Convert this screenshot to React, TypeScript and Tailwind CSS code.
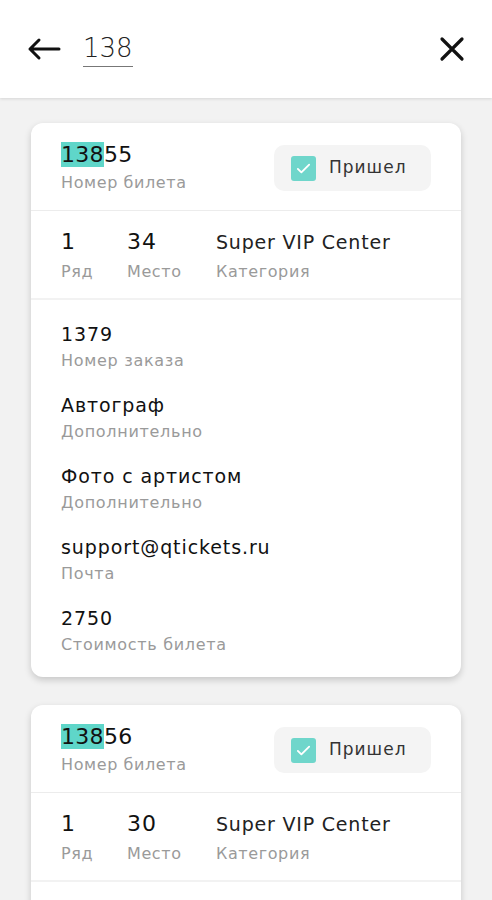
import React from 'react';

const font = { fontFamily: '"DejaVu Sans", "Noto Sans", sans-serif' };

interface Field {
  value: string;
  label: string;
}

interface Ticket {
  number: string;
  row: string;
  seat: string;
  category: string;
  details: Field[];
}

const query = '138';

const tickets: Ticket[] = [
  {
    number: '13855',
    row: '1',
    seat: '34',
    category: 'Super VIP Center',
    details: [
      { value: '1379', label: 'Номер заказа' },
      { value: 'Автограф', label: 'Дополнительно' },
      { value: 'Фото с артистом', label: 'Дополнительно' },
      { value: 'support@qtickets.ru', label: 'Почта' },
      { value: '2750', label: 'Стоимость билета' },
    ],
  },
  {
    number: '13856',
    row: '1',
    seat: '30',
    category: 'Super VIP Center',
    // rest of this card is below the fold
    details: [],
  },
];

function ArrivedButton() {
  return (
    <button className="flex items-center gap-[13px] h-[46px] w-[157px] pl-[17px] rounded-[10px] bg-[#f4f4f4]">
      <span className="w-[25px] h-[25px] rounded-[3px] bg-[#6fd6cb] flex items-center justify-center">
        <svg width="17" height="17" viewBox="0 0 24 24" fill="none" stroke="#fff" strokeWidth="2.6" strokeLinecap="round" strokeLinejoin="round">
          <path d="M4 12.5l5 5L20 6.5" />
        </svg>
      </span>
      <span className="text-[17px] tracking-[1px] text-[#333]">Пришел</span>
    </button>
  );
}

function TicketCard({ t }: { t: Ticket }) {
  const rest = t.number.slice(query.length);
  return (
    <div className="bg-white rounded-[12px] shadow-[0_3px_7px_rgba(0,0,0,0.18)] overflow-hidden">
      <div className="flex items-start justify-between pl-[30px] pr-[30px] pt-[17px] pb-[17px] border-b border-[#ececec]">
        <div>
          <div className="text-[22px] tracking-[0.3px] leading-[29px] text-[#111]">
            <span className="bg-[#5fd6c9]">{query}</span>
            {rest}
          </div>
          <div className="text-[16px] tracking-[0.6px] leading-[20px] text-[#9a9a9a] mt-[4px]">Номер билета</div>
        </div>
        <div className="pt-[5px]">
          <ArrivedButton />
        </div>
      </div>
      <div className="flex pl-[30px] pt-[17px] pb-[16px] border-b-[2px] border-[#f2f2f2]">
        <div className="w-[66px]">
          <div className="text-[22px] tracking-[1px] leading-[28px] text-[#111]">{t.row}</div>
          <div className="text-[16px] tracking-[0.6px] leading-[20px] text-[#9a9a9a] mt-[6px]">Ряд</div>
        </div>
        <div className="w-[89px]">
          <div className="text-[22px] tracking-[1px] leading-[28px] text-[#111]">{t.seat}</div>
          <div className="text-[16px] tracking-[0.6px] leading-[20px] text-[#9a9a9a] mt-[6px]">Место</div>
        </div>
        <div>
          <div className="text-[19px] tracking-[0.8px] leading-[28px] text-[#222]">{t.category}</div>
          <div className="text-[16px] tracking-[0.6px] leading-[20px] text-[#9a9a9a] mt-[6px]">Категория</div>
        </div>
      </div>
      <div className="flex flex-col gap-[21px] pl-[30px] pt-[21px] pb-[22px] min-h-[60px]">
        {t.details.map((d, i) => (
          <div key={i}>
            <div className="text-[19px] tracking-[0.9px] leading-[26px] text-[#111]">{d.value}</div>
            <div className="text-[16px] tracking-[0.7px] leading-[20px] text-[#9a9a9a] mt-[4px]">{d.label}</div>
          </div>
        ))}
      </div>
    </div>
  );
}

export default function App() {
  return (
    <div style={font} className="w-[492px] h-[900px] overflow-hidden bg-[#f2f2f2]">
      <div className="h-[98px] bg-white flex items-center px-[27px] shadow-[0_1px_3px_rgba(0,0,0,0.12)] relative z-10">
        <svg width="34" height="24" viewBox="0 0 34 24" fill="none" stroke="#111" strokeWidth="3" strokeLinecap="round" strokeLinejoin="round">
          <path d="M32 12H3M12 3L3 12l9 9" />
        </svg>
        <div className="ml-[22px] border-b border-[#777] text-[26px] leading-[32px] text-[#222] font-light pb-[2px]">
          {query}
        </div>
        <div className="flex-1" />
        <svg width="26" height="26" viewBox="0 0 26 26" fill="none" stroke="#111" strokeWidth="3.2" strokeLinecap="round">
          <path d="M3 3l20 20M23 3L3 23" />
        </svg>
      </div>
      <div className="flex flex-col gap-[28px] px-[31px] pt-[25px]">
        {tickets.map(t => (
          <TicketCard key={t.number} t={t} />
        ))}
      </div>
    </div>
  );
}
